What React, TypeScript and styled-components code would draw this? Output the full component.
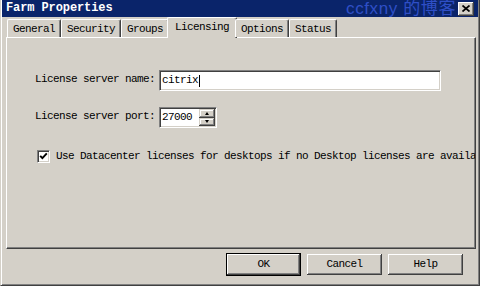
import React from 'react';
import styled, {createGlobalStyle} from 'styled-components';

const face = '#d4d0c8';
const mono = `"Liberation Mono", "DejaVu Sans Mono", monospace`;

const GlobalStyle = createGlobalStyle`
  html, body {
    margin: 0;
    padding: 0;
    background: #fff;
  }
  body {
    font-family: ${mono};
    font-size: 11px;
    letter-spacing: -0.6px;
    color: #000;
  }
`

const tabs = ['General', 'Security', 'Groups', 'Licensing', 'Options', 'Status'];

export default function App() {
  return (
    <>
      <GlobalStyle/>
      <Window>
        <TitleBar>
          <TitleText>Farm Properties</TitleText>
          <Watermark>ccfxny 的博客</Watermark>
          <CloseButton>
            <svg width="8" height="7" viewBox="0 0 8 7">
              <path d="M0.5 0.5 L7.5 6.5 M7.5 0.5 L0.5 6.5" stroke="#000" strokeWidth="1.7"/>
            </svg>
          </CloseButton>
        </TitleBar>

        <Body>
          <TabRow>
            {tabs.map(t => (
              <Tab key={t} $active={t === 'Licensing'}>{t}</Tab>
            ))}
          </TabRow>

          <Panel>
            <FieldRow>
              <Label>License server name:</Label>
              <TextBox>
                citrix<Caret/>
              </TextBox>
            </FieldRow>

            <FieldRow>
              <Label>License server port:</Label>
              <SpinBox>
                <SpinValue>27000</SpinValue>
                <SpinButtons>
                  <SpinButton><Arrow $up/></SpinButton>
                  <SpinButton><Arrow/></SpinButton>
                </SpinButtons>
              </SpinBox>
            </FieldRow>

            <CheckRow>
              <CheckBox>
                <svg width="9" height="9" viewBox="0 0 9 9">
                  <path d="M1.2 3.8 L3.4 6.2 L7.8 1.4" fill="none" stroke="#000" strokeWidth="1.9"/>
                </svg>
              </CheckBox>
              <CheckLabel>Use Datacenter licenses for desktops if no Desktop licenses are available</CheckLabel>
            </CheckRow>
          </Panel>

          <ButtonRow>
            <DefaultFrame>
              <Button>OK</Button>
            </DefaultFrame>
            <Button>Cancel</Button>
            <Button>Help</Button>
          </ButtonRow>
        </Body>
      </Window>
    </>
  )
}

const Window = styled.div`
  box-sizing: border-box;
  width: 480px;
  height: 286px;
  background: ${face};
  border-left: 1px solid ${face};
  border-right: 1px solid #404040;
  border-bottom: 1px solid #404040;
  box-shadow: inset 1px 0 #fff, inset -1px 0 #808080, inset 0 -1px #808080;
  padding: 0 1px;
  display: flex;
  flex-direction: column;
`
const TitleBar = styled.div`
  height: 17px;
  flex: none;
  background: #0a246a;
  display: flex;
  align-items: center;
  padding: 0 4px 0 4px;
  overflow: hidden;
`
const TitleText = styled.div`
  color: #fff;
  font-weight: 700;
  font-size: 12px;
  letter-spacing: -0.1px;
  line-height: 17px;
`
const Watermark = styled.div`
  margin-left: auto;
  margin-right: 2px;
  line-height: 17px;
  font-family: "Liberation Sans", "Noto Sans CJK SC", sans-serif;
  font-size: 17px;
  letter-spacing: 0.6px;
  color: #2f4fc6;
  white-space: nowrap;
`
const CloseButton = styled.div`
  width: 16px;
  height: 14px;
  background: ${face};
  box-shadow: inset -1px -1px #404040, inset 1px 1px #fff, inset -2px -2px #808080;
  display: grid;
  place-items: center;
`
const Body = styled.div`
  flex: 1;
  display: flex;
  flex-direction: column;
  padding: 0 2px 0 4px;
`
const TabRow = styled.div`
  height: 20px;
  flex: none;
  display: flex;
  align-items: flex-end;
  padding-left: 1px;
  position: relative;
  z-index: 1;
`
const Tab = styled.div<{ $active?: boolean }>`
  box-sizing: border-box;
  height: ${p => p.$active ? 21 : 18}px;
  margin: ${p => p.$active ? '0 -2px -1px' : '0'};
  padding: ${p => p.$active ? '1px 7px 0' : '2px 5px 0'};
  line-height: ${p => p.$active ? 16 : 15}px;
  background: ${face};
  border-top: 1px solid #fff;
  border-left: 1px solid #fff;
  border-right: 1px solid #404040;
  box-shadow: inset -1px 0 #808080;
  border-radius: 2px 2px 0 0;
  white-space: nowrap;
  position: relative;
`
const Panel = styled.div`
  box-sizing: border-box;
  height: 212px;
  flex: none;
  border-top: 1px solid #fff;
  border-left: 1px solid #fff;
  border-right: 1px solid #404040;
  border-bottom: 1px solid #404040;
  box-shadow: inset -1px -1px #808080;
  padding: 32px 0 0 28px;
  overflow: hidden;
  display: flex;
  flex-direction: column;
  gap: 16px;
`
const FieldRow = styled.div`
  display: flex;
  align-items: flex-start;
  gap: 4px;
`
const Label = styled.div`
  line-height: 13px;
  padding-top: 3px;
  white-space: nowrap;
`
const sunken = `
  box-sizing: border-box;
  height: 21px;
  background: #fff;
  border-top: 1px solid #808080;
  border-left: 1px solid #808080;
  border-bottom: 1px solid #fff;
  border-right: 1px solid #fff;
  box-shadow: inset 1px 1px #404040, inset -1px -1px ${face};
`
const TextBox = styled.div`
  ${sunken};
  width: 282px;
  padding: 0 2px;
  line-height: 19px;
  display: flex;
  align-items: center;
`
const Caret = styled.span`
  display: inline-block;
  width: 1px;
  height: 12px;
  background: #000;
  margin-left: 0.6px;
`
const SpinBox = styled.div`
  ${sunken};
  width: 58px;
  padding: 1px;
  display: flex;
`
const SpinValue = styled.div`
  flex: 1;
  padding-left: 1px;
  line-height: 17px;
`
const SpinButtons = styled.div`
  width: 16px;
  display: flex;
  flex-direction: column;
`
const SpinButton = styled.div`
  flex: 1;
  background: ${face};
  box-shadow: inset -1px -1px #404040, inset 1px 1px ${face}, inset -2px -2px #808080, inset 2px 2px #fff;
  display: grid;
  place-items: center;
`
const Arrow = styled.span<{ $up?: boolean }>`
  width: 0;
  height: 0;
  border-left: 2.5px solid transparent;
  border-right: 2.5px solid transparent;
  ${p => p.$up ? 'border-bottom' : 'border-top'}: 3px solid #000;
`
const CheckRow = styled.div`
  display: flex;
  align-items: center;
  gap: 6px;
  margin-top: 6px;
  padding-left: 2px;
  line-height: 13px;
  white-space: nowrap;
  min-width: 0;
`
const CheckLabel = styled.span`
  overflow: hidden;
`
const CheckBox = styled.div`
  ${sunken};
  flex: none;
  width: 13px;
  height: 13px;
  display: grid;
  place-items: center;
`
const ButtonRow = styled.div`
  display: flex;
  justify-content: flex-end;
  align-items: center;
  gap: 6px;
  margin-top: 5px;
  padding-right: 13px;
`
const DefaultFrame = styled.div`
  border: 1px solid #000;
  margin: -1px 0;
  display: flex;
`
const Button = styled.div`
  box-sizing: border-box;
  width: 75px;
  height: 21px;
  background: ${face};
  box-shadow: inset -1px -1px #404040, inset 1px 1px #fff, inset -2px -2px #808080;
  display: grid;
  place-items: center;
  line-height: 19px;
  ${DefaultFrame} > & {
    width: 73px;
    height: 21px;
  }
`
